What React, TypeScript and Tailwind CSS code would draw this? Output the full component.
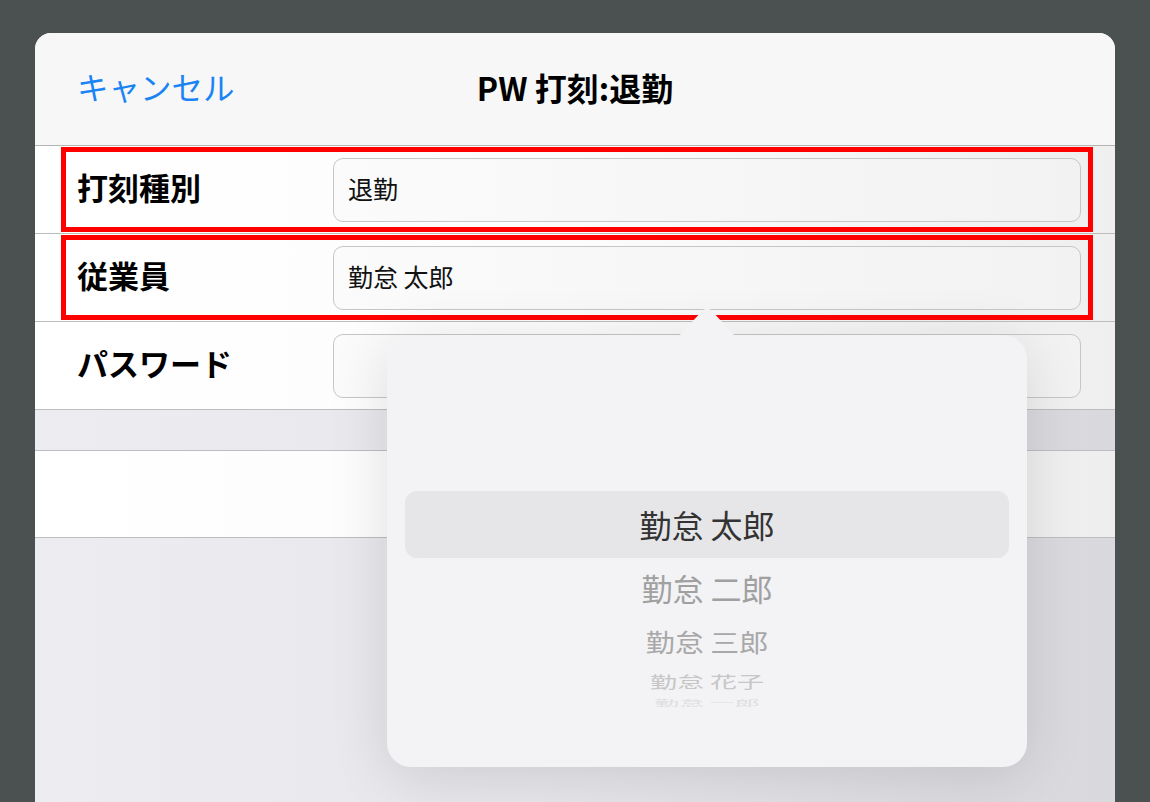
import React from "react";

const jp = { fontFamily: '"Noto Sans CJK JP", "Noto Sans", sans-serif' };

const names = [
  { text: "勤怠 二郎", cls: "text-[31px] text-[#a0a0a0] h-[60px]", sy: 1 },
  { text: "勤怠 三郎", cls: "text-[29px] text-[#a8a8a8] h-[48px]", sy: 0.85 },
  { text: "勤怠 花子", cls: "text-[27px] text-[#c6c6c6] h-[30px]", sy: 0.6 },
  { text: "勤怠 一郎", cls: "text-[25px] text-[#dedede] h-[14px]", sy: 0.3 },
];

function Row({ label, value, marked }: { label: string; value?: string; marked?: boolean }) {
  return (
    <div className="relative flex items-center h-[88px] border-b border-[#bdbdbd] bg-gradient-to-r from-white via-[#fcfcfc] to-[#efefef]">
      <span className="pl-[42px] w-[298px] text-[31px] font-bold text-black pb-[4px]">{label}</span>
      <div className="flex items-center h-[64px] w-[748px] rounded-[10px] border border-[#c6c6c6] bg-gradient-to-r from-[#fbfbfb] to-[#f2f2f2] pl-[14px] text-[25px] text-[#111] pb-[2px]">
        {value}
      </div>
      {marked && (
        <div className="absolute left-[26px] right-[22px] top-[1px] bottom-[1px] border-[5px] border-[#ff0000]" />
      )}
    </div>
  );
}

export default function App() {
  return (
    <div className="w-[1150px] h-[802px] overflow-hidden bg-[#4b5051] pt-[33px] pl-[35px]" style={jp}>
      <div className="relative w-[1080px] h-[769px] rounded-t-[16px] overflow-hidden bg-gradient-to-r from-[#ececf1] via-[#e6e6eb] to-[#d9d8dd]">
        {/* header */}
        <div className="relative flex items-center h-[113px] bg-[#f7f7f7] border-b border-[#b5b5b5] pb-[4px]">
          <span className="pl-[42px] text-[31.5px] text-[#1a84f5]">キャンセル</span>
          <span className="absolute left-0 right-0 text-center text-[32px] font-bold text-black pointer-events-none">PW 打刻:退勤</span>
        </div>
        <Row label="打刻種別" value="退勤" marked />
        <Row label="従業員" value="勤怠 太郎" marked />
        <Row label="パスワード" />
        <div className="h-[41px] border-b border-[#bdbdbd]" />
        <div className="h-[87px] border-b border-[#bdbdbd] bg-gradient-to-r from-white via-[#fbfbfb] to-[#eeeeee]" />

        {/* picker popover */}
        <div className="absolute left-[352px] top-[302px] w-[640px] h-[432px]">
          <svg className="absolute left-[292px] top-[-27px]" width="56" height="28" viewBox="0 0 56 28">
            <path d="M0 28 L24 2 Q28 -1 32 2 L56 28 Z" fill="#f3f3f5" />
          </svg>
          <div className="w-full h-full rounded-[24px] bg-[#f3f3f5] shadow-[0_10px_60px_rgba(0,0,0,0.12)] flex flex-col items-center pt-[156px]">
            <div className="w-[604px] h-[67px] rounded-[12px] bg-[#e6e6e9] flex items-center justify-center text-[32px] text-[#333] pb-[2px]">
              勤怠 太郎
            </div>
            {names.map((n) => (
              <div key={n.text} className={`flex items-center justify-center overflow-hidden ${n.cls}`}>
                <span className="inline-block" style={{ transform: `scaleY(${n.sy})` }}>{n.text}</span>
              </div>
            ))}
          </div>
        </div>
      </div>
    </div>
  );
}
